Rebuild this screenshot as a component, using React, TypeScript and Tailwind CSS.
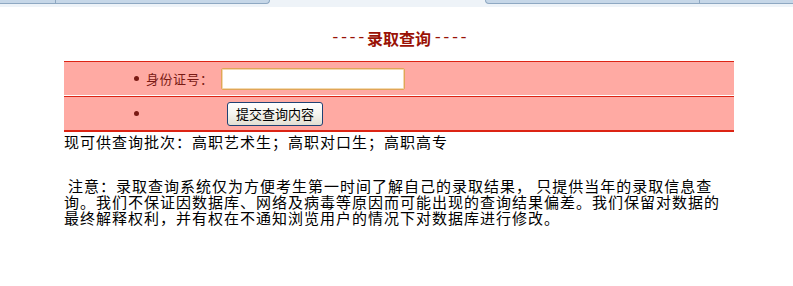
import React from 'react';

const cjk = { fontFamily: '"Noto Sans CJK SC", "Noto Sans", sans-serif' };

const Bullet: React.FC = () => (
  <span className="block w-[5px] h-[5px] rounded-full bg-[#7a1a14] shrink-0" />
);

const TabStrip: React.FC = () => (
  <div className="h-[7px] bg-[#eef3f8]">
    <div className="flex h-[4px]">
      <div className="w-[56px] bg-[#c6d7e8] border-b border-r border-[#8ea8c2]" />
      <div className="w-[214px] bg-[#c6d7e8] border-b border-r border-[#8ea8c2] rounded-br-[4px]" />
      <div className="w-[215px]" />
      <div className="w-[215px] bg-[#c6d7e8] border-b border-l border-r border-[#8ea8c2] rounded-bl-[4px]" />
      <div className="flex-1 bg-[#c6d7e8] border-b border-[#8ea8c2]" />
    </div>
  </div>
);

const App: React.FC = () => {
  return (
    <div className="w-[793px] h-[286px] bg-white overflow-hidden" style={cjk}>
      <TabStrip />

      <div className="ml-[64px] w-[670px]">
        {/* title */}
        <div className="mt-[23px] h-[16px] leading-[16px] text-center text-[16px] text-[#9a1206] font-bold flex justify-center items-center">
          <span className="font-normal tracking-[-1px]" style={{ fontFamily: '"Liberation Mono", monospace' }}>----</span>
          <span className="mx-[2px]">录取查询</span>
          <span className="font-normal tracking-[-1px]" style={{ fontFamily: '"Liberation Mono", monospace' }}>----</span>
        </div>

        {/* form rows */}
        <div className="mt-[15px]">
          <div className="h-[34px] border-t border-[#dc2414] bg-[#ffaaa3] flex items-center pl-[70px]">
            <Bullet />
            <span className="ml-[7px] w-[75px] text-[13px] tracking-[0.5px] text-[#7a1a14] leading-none">身份证号：</span>
            <input
              type="text"
              className="w-[184px] h-[22px] bg-white border border-[#e0a657] rounded-[2px] outline-none shadow-[inset_0_0_0_1px_#f3d9b0]"
            />
          </div>
          <div className="h-[1px] bg-white" />
          <div className="h-[36px] border-t border-b-2 border-[#dc2414] bg-[#ffaaa3] flex items-center pl-[70px]">
            <Bullet />
            <button
              type="button"
              className="ml-[88px] w-[96px] h-[24px] text-[13px] text-black leading-none border border-[#1f4274] rounded-[3px] bg-gradient-to-b from-white via-[#f6f5ef] to-[#e2dfd2]"
            >
              提交查询内容
            </button>
          </div>
        </div>

        <div className="text-[15px] tracking-[1px] leading-[20px] text-black whitespace-nowrap">
          现可供查询批次：高职艺术生；高职对口生；高职高专
        </div>

        <div className="mt-[26px] text-[15px] tracking-[1px] leading-[16px] text-black whitespace-nowrap">
          <div className="pl-[4px]">注意：录取查询系统仅为方便考生第一时间了解自己的录取结果， 只提供当年的录取信息查</div>
          <div>询。我们不保证因数据库、网络及病毒等原因而可能出现的查询结果偏差。我们保留对数据的</div>
          <div>最终解释权利，并有权在不通知浏览用户的情况下对数据库进行修改。</div>
        </div>
      </div>
    </div>
  );
};

export default App;
